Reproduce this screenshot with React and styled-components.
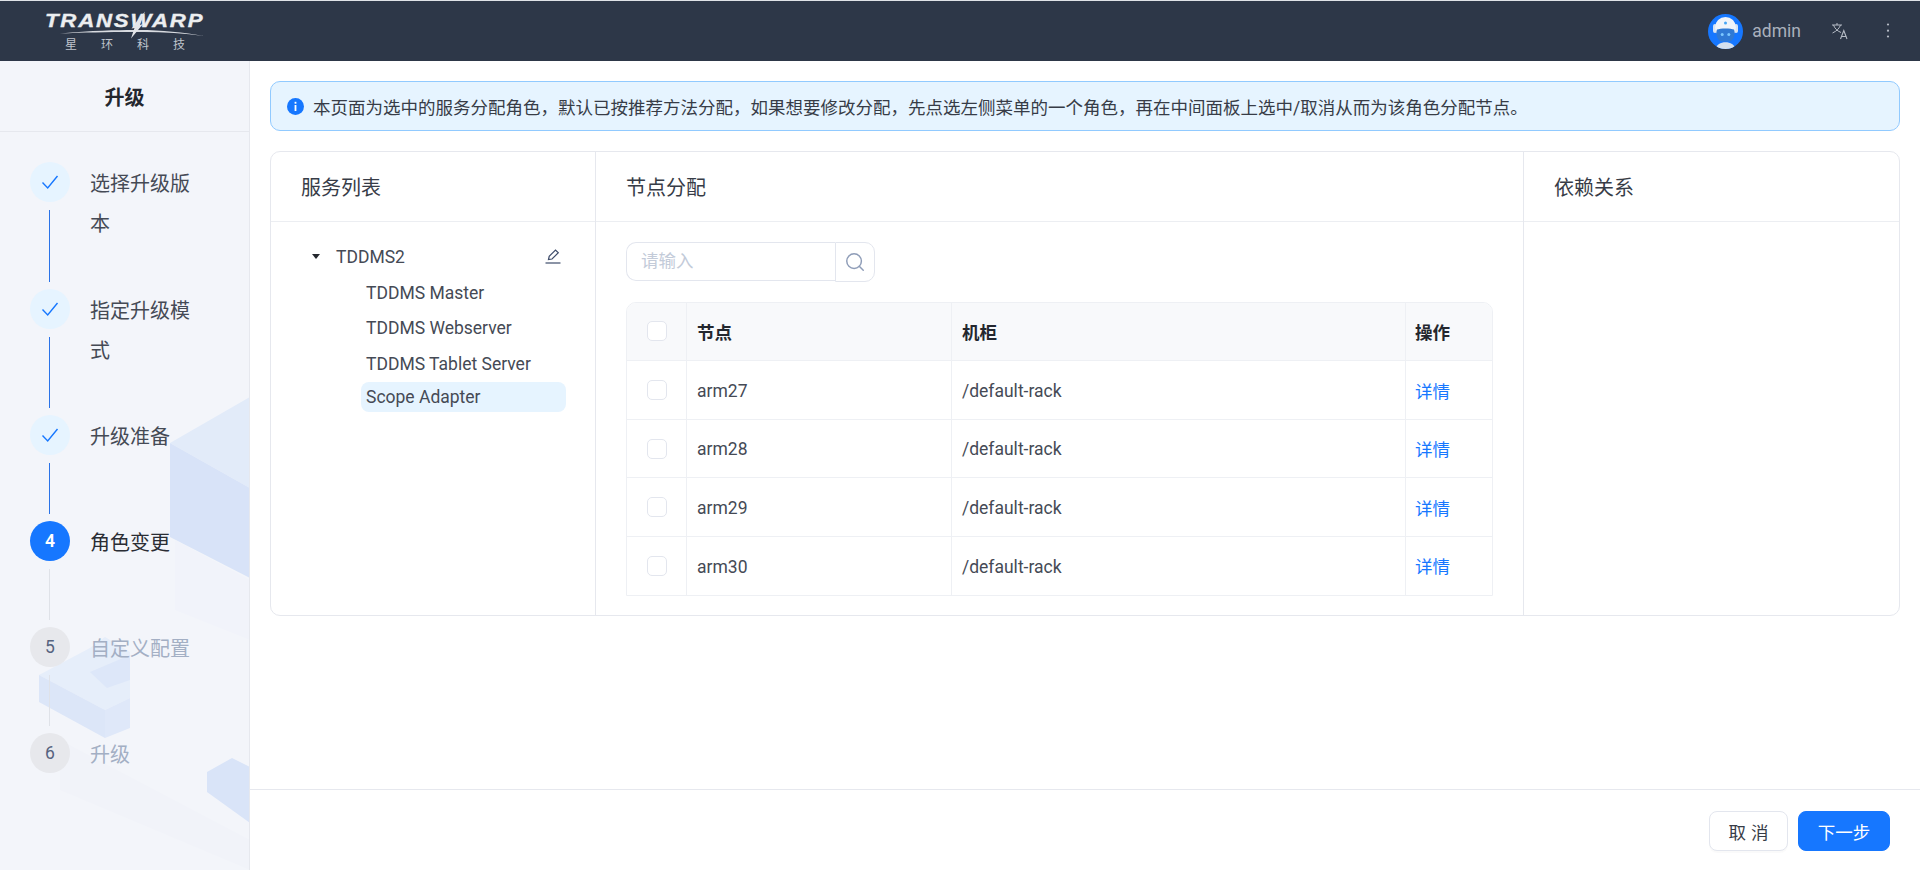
import React from 'react';
import styled, { createGlobalStyle } from 'styled-components';
import { Search } from 'lucide-react';

const Global = createGlobalStyle`
  html, body { margin: 0; padding: 0; height: 100%; background: #fff; }
  #root { height: 100%; }
  * { box-sizing: border-box; }
  body { font-family: Roboto, "Noto Sans CJK SC", sans-serif; font-size: 17.5px; color: #373c47; overflow: hidden; }
`;

const Page = styled.div`display: flex; flex-direction: column; height: 870px;`;
const TopBar = styled.header`
  height: 61px; flex: none; background: #2d3748; border-top: 1px solid #dfe2e7;
  display: flex; align-items: center; justify-content: space-between; padding: 0 25px 0 47px;
`;
const Logo = styled.div`display: flex; flex-direction: column; align-items: flex-start; width: 160px;`;
const LogoWord = styled.div`
  position: relative; height: 20px; width: 157px; color: #eceef0;
  font: italic 700 18.5px/20px "Liberation Sans", sans-serif;
`;
const LogoText = styled.span`
  display: inline-block; margin-left: -2px; letter-spacing: 1.5px; transform: scaleX(1.2); transform-origin: left center; white-space: nowrap;
  -webkit-text-stroke: 0.35px #eceef0;
`;
const LogoSwoosh = styled.svg`position: absolute; left: 0; top: 0; overflow: visible;`;
const LogoCn = styled.div`
  display: flex; gap: 24px; padding-left: 18px; margin-top: 7px; font-size: 12px; line-height: 14px; color: #bfc4cc;
`;
const TopRight = styled.div`display: flex; align-items: center;`;
const Avatar = styled.svg`width: 35px; height: 35px; display: block;`;
const UserName = styled.span`margin-left: 9px; color: #a9b0bc; font-size: 17.5px;`;
const IconGlyph = styled.svg`display: block; color: #b6bcc6; margin-left: ${p => p.$gap}px;`;

const Body = styled.div`flex: 1; display: flex; min-height: 0;`;
const Side = styled.aside`
  position: relative; width: 250px; flex: none; background: #f3f5fa; border-right: 1px solid #e6e8ee; overflow: hidden;
`;
const Cubes = styled.svg`position: absolute; left: 0; top: -61px; width: 250px; height: 870px;`;
const SideTitle = styled.div`
  position: relative; height: 71px; border-bottom: 1px solid #e6e8ee; display: flex; align-items: center; justify-content: center;
  font-size: 20px; font-weight: 700; color: #24272e;
`;
const Steps = styled.ol`position: relative; list-style: none; margin: 0; padding: 30px 0 0 30px;`;
const Step = styled.li`display: flex; gap: 20px; min-height: 106px;`;
const Rail = styled.div`display: flex; flex-direction: column; align-items: center; width: 40px; flex: none;`;
const Dot = styled.div`
  width: 40px; height: 40px; border-radius: 50%; flex: none; display: flex; align-items: center; justify-content: center; font-size: 17.5px;
  background: ${p => p.$state === 'done' ? '#e6f4ff' : p.$state === 'active' ? '#1677ff' : '#e7e8ec'};
  color: ${p => p.$state === 'active' ? '#fff' : p.$state === 'done' ? '#1677ff' : '#56637f'};
  font-weight: ${p => p.$state === 'active' ? 600 : 400};
`;
const Line = styled.div`
  width: 1px; flex: 1; margin: 8px 0 7px -2px;
  background: ${p => p.$on ? '#2a73e8' : '#dfe2e8'};
`;
const StepText = styled.div`
  width: 110px; font-size: 20px; line-height: 40px; padding-top: 2px;
  padding-bottom: ${p => p.$last ? 0 : 44.5}px;
  color: ${p => p.$state === 'pending' ? '#a3afc4' : p.$state === 'active' ? '#2a2d34' : '#454a55'};
`;

const Main = styled.main`flex: 1; min-width: 0; display: flex; flex-direction: column;`;
const Content = styled.div`flex: 1; padding: 20px 20px 0 20px; display: flex; flex-direction: column; gap: 20px;`;
const Alert = styled.div`
  height: 50px; flex: none; display: flex; align-items: center; gap: 9px; padding: 0 16px;
  background: #e6f4ff; border: 1px solid #91caff; border-radius: 10px; color: #373c47; font-size: 17.5px;
`;
const Card = styled.section`
  height: 465px; flex: none; display: grid; grid-template-columns: 324px 928px 1fr;
  border: 1px solid #e6e8ee; border-radius: 10px;
`;
const Column = styled.div`
  display: flex; flex-direction: column; min-width: 0;
  border-left: ${p => p.$first ? 'none' : '1px solid #e6e8ee'};
`;
const ColumnHead = styled.div`
  height: 69.5px; flex: none; display: flex; align-items: center; padding-left: 30px; font-size: 20px;
  border-bottom: 1px solid #eceef2; color: #373c47;
`;
const Tree = styled.div`padding: 17px 29px 0 30px;`;
const TreeRoot = styled.div`
  display: flex; align-items: center; height: 35.5px; margin-bottom: 1px; color: #454a55;
`;
const Caret = styled.span`
  width: 0; height: 0; margin: 0 16.5px 0 10.5px; border: 4.5px solid transparent; border-top: 5px solid #24272e; border-bottom: 0;
`;
const RootName = styled.span`flex: 1; padding-top: 1.5px;`;
const Pencil = styled.svg`display: block; margin-right: 5px; color: #3f4d6b;`;
const TreeLeaf = styled.div`
  height: ${p => p.$sel ? '30px' : '35.5px'}; margin: 0 0 0 60px; padding-left: 5px; display: flex; align-items: center; border-radius: 8px;
  background: ${p => p.$sel ? '#e6f4ff' : 'transparent'}; color: #454a55; white-space: nowrap;
`;
const Nodes = styled.div`padding: 20px 30px 0 30px;`;
const SearchRow = styled.div`display: flex; width: 249px; height: 40px;`;
const SearchInput = styled.input`
  flex: 1; min-width: 0; height: 39px; border: 1px solid #e3e6ee; border-right: none; border-radius: 10px 0 0 10px; padding: 0 14px; outline: none;
  font: inherit; font-size: 17.5px; color: #373c47; background: #fff;
  &::placeholder { color: #c3cbd9; opacity: 1; }
`;
const SearchBtn = styled.button`
  width: 40px; height: 40px; flex: none; padding: 0; display: flex; align-items: center; justify-content: center; background: #fff;
  border: 1px solid #e3e6ee; border-radius: 0 10px 10px 0; color: #8f9db8;
`;
const Table = styled.div`
  margin-top: 20px; width: 867px; border: 1px solid #eef0f4; border-radius: 10px 10px 0 0; overflow: hidden;
`;
const Row = styled.div`
  display: grid; grid-template-columns: 59px 265px 454px 1fr; height: ${p => p.$head ? '58.75px' : p.$last ? '57.5px' : '58.6px'};
  background: ${p => p.$head ? '#f8f9fb' : '#fff'}; font-weight: ${p => p.$head ? 700 : 400};
  color: ${p => p.$head ? '#24272e' : '#454a55'};
  border-bottom: ${p => p.$last ? 'none' : '1px solid #eef0f4'};
`;
const Cell = styled.div`
  display: flex; align-items: center; border-left: ${p => p.$first ? 'none' : '1px solid #eef0f4'};
  padding-left: ${p => p.$center ? 0 : p.$tight ? 9 : 10}px; padding-top: ${p => p.$latin ? 1.5 : 0}px;
  justify-content: ${p => p.$center ? 'center' : 'flex-start'};
`;
const Check = styled.span`display: block; width: 20px; height: 20px; border: 1px solid #e3e6ee; border-radius: 5px; background: #fff;`;
const DetailLink = styled.a`color: #1677ff; text-decoration: none;`;

const Footer = styled.footer`
  height: 81px; flex: none; border-top: 1px solid #e6e8ee; display: flex; align-items: flex-start; justify-content: flex-end; gap: 10px; padding: 21px 30px 0 0;
`;
const Btn = styled.button`
  height: 40px; padding: 0; border-radius: 8px; font: inherit; font-size: 17.5px; display: flex; align-items: center; justify-content: center;
  width: ${p => p.$primary ? '92px' : '79px'};
  background: ${p => p.$primary ? '#1677ff' : '#fff'}; color: ${p => p.$primary ? '#fff' : '#373c47'};
  border: 1px solid ${p => p.$primary ? '#1677ff' : '#e3e6ee'};
  letter-spacing: ${p => p.$primary ? 0 : '5px'}; text-indent: ${p => p.$primary ? 0 : '5px'};
  box-shadow: ${p => p.$primary ? 'none' : '0 2px 0 rgba(0,0,0,0.02)'};
`;

const steps = [
  ['选择升级版本', 'done'], ['指定升级模式', 'done'], ['升级准备', 'done'],
  ['角色变更', 'active'], ['自定义配置', 'pending'], ['升级', 'pending'],
];
const hosts = ['arm27', 'arm28', 'arm29', 'arm30'];

function Tick() {
  return (
    <svg width="18" height="18" viewBox="0 0 18 18" fill="none" stroke="currentColor" strokeWidth="1.4">
      <path d="M1.5 9.5 L6.7 15 L16.5 3" />
    </svg>
  );
}

export default function App() {
  return (
    <Page>
      <Global />
      <TopBar>
        <Logo>
          <LogoWord>
            <LogoText>TRANSWARP</LogoText>
            <LogoSwoosh width="157" height="28" viewBox="0 0 157 28">
              <path d="M13 22.5 C45 19.5 70 19 86 19 C110 18.5 135 21 157 25 C135 22 110 20.5 88 21 C60 21 35 21.5 13 22.5 Z" fill="#d8dbe0" />
              <path d="M98 0.5 L93 14 L96 13 L84 27.5 L87.5 17 L84.5 17.5 Z" fill="#e4e6ea" />
            </LogoSwoosh>
          </LogoWord>
          <LogoCn><span>星</span><span>环</span><span>科</span><span>技</span></LogoCn>
        </Logo>
        <TopRight>
          <Avatar viewBox="0 0 35 35">
            <defs><clipPath id="av"><circle cx="17.5" cy="17.5" r="17.5" /></clipPath></defs>
            <circle cx="17.5" cy="17.5" r="17.5" fill="#1677ff" />
            <g clipPath="url(#av)">
              <path d="M8 35 C8 26 27 26 27 35 Z" fill="#d4e0ef" />
              <rect x="5" y="10" width="4" height="9" rx="2" fill="#d6e3f3" />
              <rect x="26" y="10" width="4" height="9" rx="2" fill="#d6e3f3" />
              <circle cx="17.5" cy="13.5" r="10.5" fill="#f0f4fa" />
              <circle cx="17.5" cy="9" r="1.5" fill="#45a5f5" />
              <path d="M9 15.5 C12 14 23 14 26 15.5 C27.5 19 26.5 25.5 22 27.5 L13 27.5 C8.5 25.5 7.5 19 9 15.5 Z" fill="#2f79d4" />
              <circle cx="14.2" cy="20.5" r="1.5" fill="#7cc8ff" />
              <circle cx="20.8" cy="20.5" r="1.5" fill="#7cc8ff" />
            </g>
          </Avatar>
          <UserName>admin</UserName>
          <IconGlyph $gap={30} width="18" height="18" viewBox="0 0 18 18" fill="none" stroke="currentColor" strokeWidth="1">
            <path d="M1 3 H11 M6 1 V3 M2.5 3 C3.5 6 6 9 10 10.5 M9.5 3 C8.5 6 6 9 1.5 11" />
            <path d="M9.5 17 L12.8 8.5 L16 17 M10.7 14.5 H15" strokeWidth="1.1" />
          </IconGlyph>
          <IconGlyph $gap={32} width="14" height="18" viewBox="0 0 14 18" fill="currentColor">
            <circle cx="7" cy="2.5" r="1.1" /><circle cx="7" cy="8.7" r="1.1" /><circle cx="7" cy="14.5" r="1.1" />
          </IconGlyph>
        </TopRight>
      </TopBar>
      <Body>
        <Side>
          <Cubes viewBox="0 0 250 870">
            <path d="M170 443 L250 397 L250 488 Z" fill="#e2ebf9" />
            <path d="M170 443 L250 488 L250 578 L170 537 Z" fill="#d8e3f8" />
            <path d="M175 540 L250 580 L250 640 L175 610 Z" fill="#f1f3fa" />
            <path d="M39 675 L90 648 L105 637 L130 652 L130 698 L105 710 Z" fill="#e6eefa" />
            <path d="M90 672 L130 655 L130 680 L107 688 Z" fill="#dde7f9" />
            <path d="M39 675 L105 710 L105 738 L39 702 Z" fill="#dce6f8" />
            <path d="M105 710 L130 698 L130 728 L105 738 Z" fill="#dfe8f9" />
            <path d="M207 772 L232 758 L250 767 L250 823 L207 792 Z" fill="#d9e4f8" />
            <path d="M60 740 L250 840 L250 870 L60 790 Z" fill="#f1f3f9" />
          </Cubes>
          <SideTitle>升级</SideTitle>
          <Steps>
            {steps.map(([label, state], i) => (
              <Step key={label}>
                <Rail>
                  <Dot $state={state}>{state === 'done' ? <Tick /> : i + 1}</Dot>
                  {i < steps.length - 1 && <Line $on={state === 'done'} />}
                </Rail>
                <StepText $state={state} $last={i === steps.length - 1}>{label}</StepText>
              </Step>
            ))}
          </Steps>
        </Side>
        <Main>
          <Content>
            <Alert>
              <svg width="17" height="17" viewBox="0 0 17 17">
                <circle cx="8.5" cy="8.5" r="8.5" fill="#1677ff" />
                <rect x="7.6" y="7" width="1.8" height="6" fill="#fff" />
                <rect x="7.6" y="3.8" width="1.8" height="1.9" fill="#fff" />
              </svg>
              本页面为选中的服务分配角色，默认已按推荐方法分配，如果想要修改分配，先点选左侧菜单的一个角色，再在中间面板上选中/取消从而为该角色分配节点。
            </Alert>
            <Card>
              <Column $first>
                <ColumnHead>服务列表</ColumnHead>
                <Tree>
                  <TreeRoot>
                    <Caret />
                    <RootName>TDDMS2</RootName>
                    <Pencil width="16" height="16" viewBox="0 0 16 16" fill="none" stroke="currentColor" strokeWidth="1.2">
                      <path d="M3.5 11.5 L4.2 8.3 L10.5 2 L13.3 4.8 L7 11 Z" />
                      <path d="M0.5 15 H15.5" />
                    </Pencil>
                  </TreeRoot>
                  <TreeLeaf>TDDMS Master</TreeLeaf>
                  <TreeLeaf>TDDMS Webserver</TreeLeaf>
                  <TreeLeaf>TDDMS Tablet Server</TreeLeaf>
                  <TreeLeaf $sel>Scope Adapter</TreeLeaf>
                </Tree>
              </Column>
              <Column>
                <ColumnHead>节点分配</ColumnHead>
                <Nodes>
                  <SearchRow>
                    <SearchInput placeholder="请输入" />
                    <SearchBtn><Search size={22} strokeWidth={1.6} /></SearchBtn>
                  </SearchRow>
                  <Table>
                    <Row $head>
                      <Cell $first $center><Check /></Cell>
                      <Cell>节点</Cell>
                      <Cell>机柜</Cell>
                      <Cell $tight>操作</Cell>
                    </Row>
                    {hosts.map((h, i) => (
                      <Row key={h} $last={i === hosts.length - 1}>
                        <Cell $first $center><Check /></Cell>
                        <Cell $latin>{h}</Cell>
                        <Cell $latin>/default-rack</Cell>
                        <Cell $tight><DetailLink href="#">详情</DetailLink></Cell>
                      </Row>
                    ))}
                  </Table>
                </Nodes>
              </Column>
              <Column>
                <ColumnHead>依赖关系</ColumnHead>
              </Column>
            </Card>
          </Content>
          <Footer>
            <Btn>取消</Btn>
            <Btn $primary>下一步</Btn>
          </Footer>
        </Main>
      </Body>
    </Page>
  );
}
